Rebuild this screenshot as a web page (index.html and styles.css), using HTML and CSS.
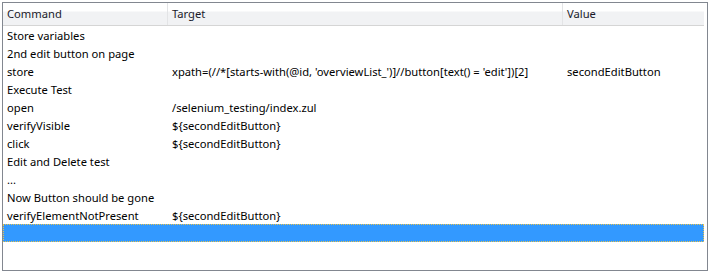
FILE: index.html
```html
<!DOCTYPE html>
<html>
<head>
<meta charset="utf-8">
<link rel="stylesheet" href="styles.css">
</head>
<body>
<div class="frame">
  <div class="grid">
    <div class="head">
      <div class="hc c1">Command</div>
      <div class="hc c2">Target</div>
      <div class="hc c3">Value</div>
    </div>
    <div class="row"><div class="c c1">Store variables</div><div class="c c2"></div><div class="c c3"></div></div>
    <div class="row"><div class="c c1">2nd edit button on page</div><div class="c c2"></div><div class="c c3"></div></div>
    <div class="row"><div class="c c1">store</div><div class="c c2">xpath=(//*[starts-with(@id, 'overviewList_')]//button[text() = 'edit'])[2]</div><div class="c c3">secondEditButton</div></div>
    <div class="row"><div class="c c1">Execute Test</div><div class="c c2"></div><div class="c c3"></div></div>
    <div class="row"><div class="c c1">open</div><div class="c c2">/selenium_testing/index.zul</div><div class="c c3"></div></div>
    <div class="row"><div class="c c1">verifyVisible</div><div class="c c2">${secondEditButton}</div><div class="c c3"></div></div>
    <div class="row"><div class="c c1">click</div><div class="c c2">${secondEditButton}</div><div class="c c3"></div></div>
    <div class="row"><div class="c c1">Edit and Delete test</div><div class="c c2"></div><div class="c c3"></div></div>
    <div class="row"><div class="c c1">...</div><div class="c c2"></div><div class="c c3"></div></div>
    <div class="row"><div class="c c1">Now Button should be gone</div><div class="c c2"></div><div class="c c3"></div></div>
    <div class="row"><div class="c c1">verifyElementNotPresent</div><div class="c c2">${secondEditButton}</div><div class="c c3"></div></div>
    <div class="row selected"><div class="c c1"></div><div class="c c2"></div><div class="c c3"></div></div>
  </div>
</div>
</body>
</html>
```
FILE: styles.css
```css
html, body {
  margin: 0;
  padding: 0;
  background: #ffffff;
}
body {
  padding: 2px 0 0 2px;
  font-family: "Noto Sans", "Open Sans", sans-serif;
  font-size: 11.2px;
  color: #000;
}
.frame {
  width: 704px;
  height: 267px;
  border: 1px solid #828790;
  background: #fff;
  overflow: hidden;
}
.grid {
  width: 701px;
}
.head {
  display: flex;
  height: 22px;
  border-bottom: 1px solid #d5d5d5;
  background: linear-gradient(to bottom, #ffffff 0, #ffffff 8px, #f1f2f4 9px, #f1f2f4 100%);
}
.hc {
  box-sizing: border-box;
  height: 22px;
  line-height: 22px;
  padding-left: 4px;
  color: #1a1a2a;
  border-right: 1px solid #e3e4e6;
  white-space: nowrap;
}
.c1 { width: 165px; flex: none; box-sizing: border-box; }
.c2 { width: 395px; flex: none; box-sizing: border-box; }
.c3 { width: 141px; flex: none; box-sizing: border-box; }
.hc.c3 { border-right: none; }
.row {
  display: flex;
  height: 18px;
}
.c {
  line-height: 18px;
  height: 18px;
  padding-top: 1px;
  padding-left: 4px;
  white-space: nowrap;
  overflow: hidden;
}
.row.selected {
  background: #3399ff;
  outline: 1px dotted #e8c24a;
  outline-offset: -1px;
}
```
